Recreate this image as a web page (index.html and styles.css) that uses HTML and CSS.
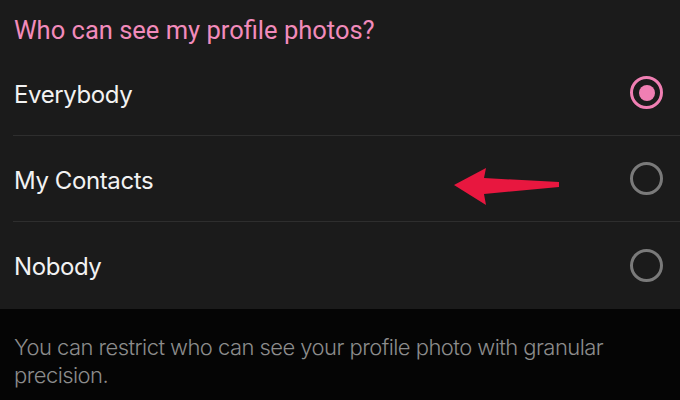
FILE: index.html
```html
<!DOCTYPE html>
<html>
<head>
<meta charset="utf-8">
<link rel="stylesheet" href="styles.css">
</head>
<body>
<div class="panel">
  <div class="title">Who can see my profile photos?</div>
  <div class="options">
    <div class="row">
      <span class="label">Everybody</span>
      <span class="radio checked"><span class="dot"></span></span>
    </div>
    <div class="row">
      <span class="label">My Contacts</span>
      <svg class="arrow" width="110" height="40" viewBox="450 166 110 40">
        <polygon points="454,185 486,168 484,178 559,182 559,187 484,194 486,205" fill="#e8173f"/>
      </svg>
      <span class="radio"></span>
    </div>
    <div class="row last">
      <span class="label">Nobody</span>
      <span class="radio"></span>
    </div>
  </div>
</div>
<div class="footer">You can restrict who can see your profile photo with granular precision.</div>
</body>
</html>
```
FILE: styles.css
```css
html, body {
  margin: 0;
  padding: 0;
  background: #050505;
}
body {
  width: 680px;
  height: 400px;
  overflow: hidden;
}
.panel {
  background: #1b1b1b;
  height: 309px;
  display: flex;
  flex-direction: column;
}
.title {
  font-family: Roboto, sans-serif;
  font-size: 25.5px;
  color: #f28bbb;
  padding: 14px 0 0 14px;
  height: 36px;
  line-height: 32px;
  letter-spacing: 0;
}
.options {
  padding-left: 13px;
}
.row {
  height: 86px;
  display: flex;
  align-items: center;
  border-bottom: 1px solid #2e2e2e;
  box-sizing: border-box;
  position: relative;
  padding-right: 17px;
}
.row.last {
  border-bottom: none;
}
.label {
  flex: 1;
  font-family: Inter, sans-serif;
  font-size: 24px;
  color: #f2f2f2;
  padding: 3px 0 0 1px;
  letter-spacing: -0.4px;
}
.radio {
  width: 33px;
  height: 33px;
  border-radius: 50%;
  border: 3px solid #7a7a7a;
  box-sizing: border-box;
  display: flex;
  align-items: center;
  justify-content: center;
}
.radio.checked {
  border-color: #f07fb3;
  border-width: 3.5px;
}
.dot {
  width: 16px;
  height: 16px;
  border-radius: 50%;
  background: #f07fb3;
}
.arrow {
  position: absolute;
  left: 437px;
  top: 30px;
}
.footer {
  font-family: Inter, sans-serif;
  font-weight: 300;
  font-size: 22px;
  line-height: 28px;
  color: #8c8c8c;
  padding: 24px 40px 0 14px;
  letter-spacing: -0.55px;
}
```
